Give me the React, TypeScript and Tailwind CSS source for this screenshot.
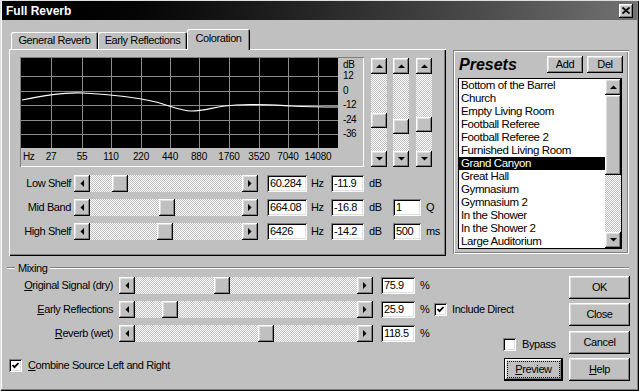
import React from "react";

const FONT = "font-['Liberation_Sans',Arial,sans-serif]";
const RAISED =
  "shadow-[inset_-1px_-1px_#000,inset_1px_1px_#fff,inset_-2px_-2px_#808080,inset_2px_2px_#dfdfdf]";
const SUNKEN =
  "shadow-[inset_1px_1px_#808080,inset_-1px_-1px_#fff,inset_2px_2px_#000,inset_-2px_-2px_#dfdfdf]";
const DITHER =
  "bg-[repeating-conic-gradient(#c0c0c0_0%_25%,#ffffff_0%_50%)] bg-[length:2px_2px]";
const ETCH =
  "shadow-[inset_1px_1px_#808080,inset_-1px_-1px_#fff,inset_2px_2px_#fff,inset_-2px_-2px_#808080]";

type Dir = "up" | "down" | "left" | "right";

function Tri({ dir }: { dir: Dir }) {
  if (dir === "up")
    return (
      <svg width="7" height="4" viewBox="0 0 7 4">
        <polygon points="0,4 7,4 3.5,0.5" fill="#000" />
      </svg>
    );
  if (dir === "down")
    return (
      <svg width="7" height="4" viewBox="0 0 7 4">
        <polygon points="0,0 7,0 3.5,3.5" fill="#000" />
      </svg>
    );
  if (dir === "left")
    return (
      <svg width="4" height="7" viewBox="0 0 4 7">
        <polygon points="4,0 4,7 0.5,3.5" fill="#000" />
      </svg>
    );
  return (
    <svg width="4" height="7" viewBox="0 0 4 7">
      <polygon points="0,0 0,7 3.5,3.5" fill="#000" />
    </svg>
  );
}

function ArrowBtn({ dir, className }: { dir: Dir; className: string }) {
  return (
    <div className={`shrink-0 bg-[#c0c0c0] ${RAISED} flex items-center justify-center ${className}`}>
      <Tri dir={dir} />
    </div>
  );
}

function HScroll({ w, thumb, className = "" }: { w: string; thumb: number; className?: string }) {
  return (
    <div className={`flex h-[17px] shrink-0 ${w} ${className}`}>
      <ArrowBtn dir="left" className="w-[16px] h-[17px]" />
      <div className={`relative flex-1 ${DITHER}`}>
        <div
          className={`absolute top-0 h-[17px] w-[16px] bg-[#c0c0c0] ${RAISED}`}
          style={{ left: thumb }}
        />
      </div>
      <ArrowBtn dir="right" className="w-[16px] h-[17px]" />
    </div>
  );
}

function VScroll({ thumb, className = "" }: { thumb: number; className?: string }) {
  return (
    <div className={`flex flex-col w-[16px] h-[109px] shrink-0 ${className}`}>
      <ArrowBtn dir="up" className="w-[16px] h-[16px]" />
      <div className={`relative flex-1 ${DITHER}`}>
        <div
          className={`absolute left-0 w-[16px] h-[15px] bg-[#c0c0c0] ${RAISED}`}
          style={{ top: thumb }}
        />
      </div>
      <ArrowBtn dir="down" className="w-[16px] h-[16px]" />
    </div>
  );
}

function Field({ w, value, className = "" }: { w: string; value: string; className?: string }) {
  return (
    <div
      className={`shrink-0 h-[17px] bg-white ${SUNKEN} pl-[3px] flex items-center leading-none ${w} ${className}`}
    >
      {value}
    </div>
  );
}

function CheckBox({ checked }: { checked: boolean }) {
  return (
    <div className={`shrink-0 w-[13px] h-[13px] bg-white ${SUNKEN} flex items-center justify-center`}>
      {checked && (
        <svg width="7" height="7" viewBox="0 0 7 7">
          <path d="M0.5,3 L2.5,5.2 L6.5,1" stroke="#000" strokeWidth="1.8" fill="none" />
        </svg>
      )}
    </div>
  );
}

function Button({ className = "", children }: { className?: string; children: React.ReactNode }) {
  return (
    <div className={`shrink-0 bg-[#c0c0c0] ${RAISED} flex items-center justify-center leading-none ${className}`}>
      {children}
    </div>
  );
}

const VLINES = [30, 61, 90, 120, 149, 178, 208, 238, 267, 297];
const HLINES = [18, 33, 47, 62, 76];
const HZ = ["27", "55", "110", "220", "440", "880", "1760", "3520", "7040", "14080"];
const DB: [string, number][] = [
  ["dB", 7],
  ["12", 18],
  ["0", 33],
  ["-12", 47],
  ["-24", 62],
  ["-36", 76],
];

function Graph() {
  return (
    <div className="relative w-[344px] h-[110px] shrink-0 shadow-[inset_1px_1px_#808080,inset_-1px_-1px_#fff]">
      <svg
        width="317"
        height="90"
        viewBox="0 0 317 90"
        className="ml-[1px] mt-[1px] block bg-black"
        shapeRendering="crispEdges"
      >
        {VLINES.map((x) => (
          <line key={x} x1={x + 0.5} y1={0} x2={x + 0.5} y2={90} stroke="#8c8c8c" strokeWidth="1" />
        ))}
        {HLINES.map((y) => (
          <line key={y} x1={0} y1={y + 0.5} x2={317} y2={y + 0.5} stroke="#8c8c8c" strokeWidth="1" />
        ))}
        <path
          d="M1,42 C20,38 45,34 62,35 C80,36 110,38 135,44 C150,48 160,53 170,53 C185,53 195,48 215,47 C235,46 250,47 270,48 C290,49 305,49 317,49"
          stroke="#ffffff"
          strokeWidth="1.2"
          fill="none"
          shapeRendering="auto"
        />
      </svg>
      <span className="absolute left-[3px] top-[95px] text-[10px] leading-[9px]">Hz</span>
      {HZ.map((t, i) => (
        <span
          key={t}
          className="absolute top-[95px] text-[10px] leading-[9px] tracking-[-0.2px] -translate-x-1/2"
          style={{ left: VLINES[i] + 1 }}
        >
          {t}
        </span>
      ))}
      {DB.map(([t, y]) => (
        <span
          key={t}
          className="absolute left-[323px] text-[10px] leading-[9px] -translate-y-1/2"
          style={{ top: y }}
        >
          {t}
        </span>
      ))}
    </div>
  );
}

function ShelfRow({
  label,
  thumb,
  hz,
  db,
  extra,
}: {
  label: string;
  thumb: number;
  hz: string;
  db: string;
  extra?: [string, string];
}) {
  return (
    <div className="flex items-center h-[17px]">
      <div className="w-[51px] text-right leading-none shrink-0">{label}</div>
      <HScroll w="w-[184px]" thumb={thumb} className="ml-[3px]" />
      <Field w="w-[40px]" value={hz} className="ml-[9px]" />
      <span className="ml-[4px] w-[20px] shrink-0 leading-none">Hz</span>
      <Field w="w-[33px]" value={db} />
      <span className="ml-[5px] w-[24px] shrink-0 leading-none">dB</span>
      {extra && (
        <>
          <Field w="w-[28px]" value={extra[0]} />
          <span className="ml-[5px] leading-none">{extra[1]}</span>
        </>
      )}
    </div>
  );
}

const PRESETS = [
  "Bottom of the Barrel",
  "Church",
  "Empty Living Room",
  "Football Referee",
  "Football Referee 2",
  "Furnished Living Room",
  "Grand Canyon",
  "Great Hall",
  "Gymnasium",
  "Gymnasium 2",
  "In the Shower",
  "In the Shower 2",
  "Large Auditorium",
];

function MixRow({
  label,
  thumb,
  value,
  include,
}: {
  label: React.ReactNode;
  thumb: number;
  value: string;
  include?: boolean;
}) {
  return (
    <div className="flex items-center h-[17px]">
      <div className="w-[104px] text-right leading-none shrink-0">{label}</div>
      <HScroll w="w-[254px]" thumb={thumb} className="ml-[6px]" />
      <Field w="w-[34px]" value={value} className="ml-[8px]" />
      <span className="ml-[5px] w-[9px] shrink-0 leading-none">%</span>
      {include && (
        <>
          <div className="ml-[5px]">
            <CheckBox checked />
          </div>
          <span className="ml-[5px] leading-none">Include Direct</span>
        </>
      )}
    </div>
  );
}

export default function App() {
  return (
    <div
      className={`w-[639px] h-[391px] bg-[#c0c0c0] ${FONT} text-[11px] tracking-[-0.4px] whitespace-nowrap text-black overflow-hidden flex flex-col shadow-[inset_1px_1px_#dfdfdf,inset_-1px_-1px_#000,inset_-2px_-2px_#808080,inset_2px_2px_#fff]`}
    >
      {/* Title bar */}
      <div className="mx-[2px] mt-[1px] h-[19px] shrink-0 flex items-center bg-linear-to-r from-black to-[#727272] pl-[4px] pr-[4px]">
        <span className="font-bold text-[12px] tracking-normal text-white leading-none">Full Reverb</span>
        <div className={`ml-auto w-[14px] h-[14px] bg-[#c0c0c0] ${RAISED} flex items-center justify-center`}>
          <svg width="8" height="7" viewBox="0 0 8 7">
            <path d="M0.5,0.5 L7.5,6.5 M7.5,0.5 L0.5,6.5" stroke="#000" strokeWidth="1.8" />
          </svg>
        </div>
      </div>

      {/* Upper section */}
      <div className="flex mt-[9px] ml-[9px] shrink-0">
        {/* Tab control */}
        <div className="flex flex-col w-[437px] shrink-0">
          <div className="flex items-end h-[20px] pl-[2px]">
            <div className="h-[17px] w-[87px] rounded-tl-[2px] rounded-tr-[2px] shadow-[inset_1px_1px_#fff,inset_-1px_0_#000,inset_-2px_0_#808080] flex items-center justify-center leading-none">
              General Reverb
            </div>
            <div className="h-[17px] w-[89px] rounded-tl-[2px] rounded-tr-[2px] shadow-[inset_1px_1px_#fff,inset_-1px_0_#000,inset_-2px_0_#808080] flex items-center justify-center leading-none">
              Early Reflections
            </div>
            <div className="relative z-10 -mb-[1px] h-[21px] w-[63px] bg-[#c0c0c0] rounded-tl-[2px] rounded-tr-[2px] shadow-[inset_1px_1px_#fff,inset_-1px_0_#000,inset_-2px_0_#808080] flex items-center justify-center pb-[3px] leading-none">
              Coloration
            </div>
          </div>
          <div className="h-[207px] shadow-[inset_1px_1px_#fff,inset_-1px_-1px_#000,inset_-2px_-2px_#808080] pt-[8px] pl-[11px] flex flex-col">
            <div className="flex">
              <Graph />
              <VScroll thumb={39} className="mt-[1px] ml-[7px]" />
              <VScroll thumb={45} className="mt-[1px] ml-[6px]" />
              <VScroll thumb={43} className="mt-[1px] ml-[7px]" />
            </div>
            <div className="flex flex-col gap-[7px] mt-[8px]">
              <ShelfRow label="Low Shelf" thumb={22} hz="60.284" db="-11.9" />
              <ShelfRow label="Mid Band" thumb={69} hz="664.08" db="-16.8" extra={["1", "Q"]} />
              <ShelfRow label="High Shelf" thumb={67} hz="6426" db="-14.2" extra={["500", "ms"]} />
            </div>
          </div>
        </div>

        {/* Presets group */}
        <div className={`ml-[7px] mt-[21px] w-[176px] h-[204px] shrink-0 ${ETCH} flex flex-col`}>
          <div className="flex items-center mt-[6px] pl-[6px] pr-[6px] h-[17px]">
            <span className="font-bold italic text-[16px] tracking-normal leading-none">Presets</span>
            <Button className="ml-auto w-[36px] h-[17px]">Add</Button>
            <Button className="ml-[4px] w-[36px] h-[17px]">Del</Button>
          </div>
          <div className="mt-[5px] ml-[5px] w-[164px] h-[171px] border border-black bg-white flex">
            <div className="flex-1 flex flex-col text-[11.5px]">
              {PRESETS.map((p) => (
                <div
                  key={p}
                  className={`h-[13px] leading-[13px] pl-[2px] ${
                    p === "Grand Canyon" ? "bg-black text-white" : ""
                  }`}
                >
                  {p}
                </div>
              ))}
            </div>
            <div className="w-[16px] flex flex-col">
              <ArrowBtn dir="up" className="w-[16px] h-[16px]" />
              <div className={`w-[16px] h-[80px] bg-[#c0c0c0] ${RAISED}`} />
              <div className={`flex-1 ${DITHER}`} />
              <ArrowBtn dir="down" className="w-[16px] h-[16px]" />
            </div>
          </div>
        </div>
      </div>

      {/* Mixing header */}
      <div className="flex items-center h-[12px] mt-[6px] ml-[7px] w-[622px] shrink-0">
        <div className="w-[8px] h-[2px] border-t border-t-[#808080] border-b border-b-white" />
        <span className="px-[3px] leading-none">Mixing</span>
        <div className="flex-1 h-[2px] border-t border-t-[#808080] border-b border-b-white" />
      </div>

      {/* Lower section */}
      <div className="flex mt-[2px] shrink-0">
        <div className="ml-[9px] w-[494px] pt-[1px] flex flex-col">
          <div className="flex flex-col gap-[7px]">
            <MixRow
              label={
                <>
                  <span className="underline">O</span>riginal Signal (dry)
                </>
              }
              thumb={79}
              value="75.9"
            />
            <MixRow
              label={
                <>
                  <span className="underline">E</span>arly Reflections
                </>
              }
              thumb={27}
              value="25.9"
              include
            />
            <MixRow
              label={
                <>
                  <span className="underline">R</span>everb (wet)
                </>
              }
              thumb={123}
              value="118.5"
            />
          </div>
          <div className="flex items-center mt-[17px] h-[13px]">
            <CheckBox checked />
            <span className="ml-[6px] leading-none">
              <span className="underline">C</span>ombine Source Left and Right
            </span>
          </div>
        </div>

        <div className="w-[60px] h-[105px] flex flex-col justify-end">
          <div className="flex items-center h-[13px]">
            <CheckBox checked={false} />
            <span className="ml-[6px] leading-none">Bypass</span>
          </div>
          <div className="mt-[7px] ml-[1px] w-[59px] h-[23px] border border-black flex">
            <div className={`flex-1 flex p-[2px] bg-[#c0c0c0] ${RAISED}`}>
              <div className="flex-1 border border-dotted border-black flex items-center justify-center leading-none">
                <span>
                  <span className="underline">P</span>review
                </span>
              </div>
            </div>
          </div>
        </div>

        <div className="ml-[6px] w-[61px] flex flex-col">
          <Button className="h-[23px]">OK</Button>
          <Button className="h-[23px] mt-[4px]">Close</Button>
          <Button className="h-[23px] mt-[5px]">Cancel</Button>
          <Button className="h-[23px] mt-[4px]">
            <span>
              <span className="underline">H</span>elp
            </span>
          </Button>
        </div>
      </div>
    </div>
  );
}
